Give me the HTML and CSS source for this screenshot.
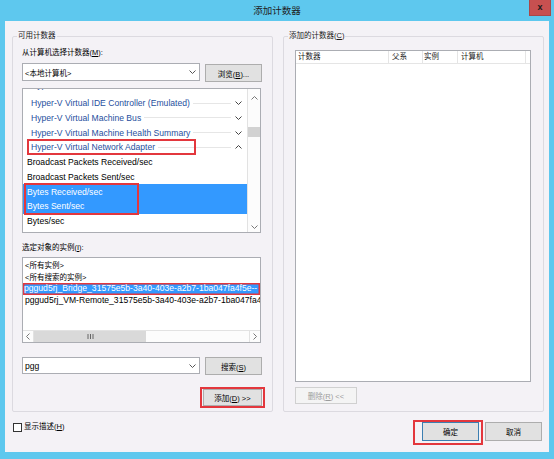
FILE: index.html
```html
<!DOCTYPE html>
<html>
<head>
<meta charset="utf-8">
<title>添加计数器</title>
<link rel="stylesheet" href="styles.css">
</head>
<body>
<div class="window">
  <div class="titlebar">
    <span></span>
    <span class="title">添加计数器</span>
    <span class="close">x</span>
  </div>
  <div class="client">
    <div class="groups">
      <fieldset class="group">
        <legend>可用计数器</legend>
        <div class="gbody">
          <div class="label">从计算机选择计数器(<u>M</u>):</div>
          <div class="row first">
            <div class="combo"><span>&lt;本地计算机&gt;</span><svg class="chev" width="7" height="4" viewBox="0 0 7 4"><path d="M0.5 0.5 L3.5 3.5 L6.5 0.5" fill="none" stroke="#555" stroke-width="1"/></svg></div>
            <button class="btn browse">浏览(<u>B</u>)...</button>
          </div>
          <div class="listbox counters">
            <div class="items">
              <div class="inner">
                <div class="item cat clip"><span>Hyper-V Virtual Hard Disk</span><span class="rule"></span><svg class="chev" width="7" height="4" viewBox="0 0 7 4"><path d="M0.5 0.5 L3.5 3.5 L6.5 0.5" fill="none" stroke="#444" stroke-width="1"/></svg></div>
                <div class="item cat"><span>Hyper-V Virtual IDE Controller (Emulated)</span><span class="rule"></span><svg class="chev" width="7" height="4" viewBox="0 0 7 4"><path d="M0.5 0.5 L3.5 3.5 L6.5 0.5" fill="none" stroke="#444" stroke-width="1"/></svg></div>
                <div class="item cat"><span>Hyper-V Virtual Machine Bus</span><span class="rule"></span><svg class="chev" width="7" height="4" viewBox="0 0 7 4"><path d="M0.5 0.5 L3.5 3.5 L6.5 0.5" fill="none" stroke="#444" stroke-width="1"/></svg></div>
                <div class="item cat"><span>Hyper-V Virtual Machine Health Summary</span><span class="rule"></span><svg class="chev" width="7" height="4" viewBox="0 0 7 4"><path d="M0.5 0.5 L3.5 3.5 L6.5 0.5" fill="none" stroke="#444" stroke-width="1"/></svg></div>
                <div class="item cat"><span>Hyper-V Virtual Network Adapter</span><span class="rule"></span><svg class="chev" width="7" height="4" viewBox="0 0 7 4"><path d="M0.5 3.5 L3.5 0.5 L6.5 3.5" fill="none" stroke="#444" stroke-width="1"/></svg></div>
                <div class="item">Broadcast Packets Received/sec</div>
                <div class="item">Broadcast Packets Sent/sec</div>
                <div class="item sel">Bytes Received/sec</div>
                <div class="item sel">Bytes Sent/sec</div>
                <div class="item">Bytes/sec</div>
                <div class="item">Discarded Packets Received/sec</div>
              </div>
            </div>
            <div class="vscroll">
              <div class="sarrow up"><svg width="7" height="4" viewBox="0 0 7 4"><path d="M0.5 3.5 L3.5 0.5 L6.5 3.5" fill="none" stroke="#777" stroke-width="1"/></svg></div>
              <div class="vthumb"></div>
              <div class="strack"></div>
              <div class="sarrow down"><svg width="7" height="4" viewBox="0 0 7 4"><path d="M0.5 0.5 L3.5 3.5 L6.5 0.5" fill="none" stroke="#777" stroke-width="1"/></svg></div>
            </div>
            <div class="annot annot-net"></div>
            <div class="annot annot-bytes"></div>
          </div>
          <div class="label second">选定对象的实例(<u>I</u>):</div>
          <div class="listbox instances">
            <div class="items">
              <div class="irow">&lt;所有实例&gt;</div>
              <div class="irow">&lt;所有搜索的实例&gt;</div>
              <div class="irow lat isel">pggud5rj_Bridge_31575e5b-3a40-403e-a2b7-1ba047fa4f5e--</div>
              <div class="irow lat">pggud5rj_VM-Remote_31575e5b-3a40-403e-a2b7-1ba047fa4f5e--</div>
            </div>
            <div class="hscroll">
              <div class="harrow left"><svg width="4" height="7" viewBox="0 0 4 7"><path d="M3.5 0.5 L0.5 3.5 L3.5 6.5" fill="none" stroke="#777" stroke-width="1"/></svg></div>
              <div class="hthumb"><svg width="7" height="5" viewBox="0 0 7 5"><path d="M1 0 V5 M3.5 0 V5 M6 0 V5" stroke="#666" stroke-width="1"/></svg></div>
              <div class="strack"></div>
              <div class="harrow right"><svg width="4" height="7" viewBox="0 0 4 7"><path d="M0.5 0.5 L3.5 3.5 L0.5 6.5" fill="none" stroke="#777" stroke-width="1"/></svg></div>
            </div>
          </div>
          <div class="row search">
            <div class="combo small"><span class="lat">pgg</span><svg class="chev" width="7" height="4" viewBox="0 0 7 4"><path d="M0.5 0.5 L3.5 3.5 L6.5 0.5" fill="none" stroke="#555" stroke-width="1"/></svg></div>
            <button class="btn">搜索(<u>S</u>)</button>
          </div>
          <span class="redbox addbox"><button class="btn add">添加(<u>D</u>) &gt;&gt;</button></span>
        </div>
      </fieldset>
      <fieldset class="group">
        <legend>添加的计数器(<u>C</u>)</legend>
        <div class="gbody right">
          <div class="table">
            <div class="thead">
              <div class="th c1">计数器</div>
              <div class="th c2">父系</div>
              <div class="th c3">实例</div>
              <div class="th c4">计算机</div>
            </div>
          </div>
          <button class="btn remove" disabled>删除(<u>R</u>) &lt;&lt;</button>
        </div>
      </fieldset>
    </div>
    <div class="footer">
      <label class="check"><span class="box"></span><span>显示描述(<u>H</u>)</span></label>
      <span class="spacer"></span>
      <span class="redbox okbox"><button class="btn ok">确定</button></span>
      <button class="btn cancel">取消</button>
    </div>
  </div>
</div>
</body>
</html>
```

FILE: styles.css
```css
* { box-sizing: border-box; }
html, body { margin: 0; padding: 0; }
body {
  width: 554px;
  height: 459px;
  overflow: hidden;
  background: #5ec8ee;
  font-family: "Liberation Sans", "Noto Sans CJK SC", sans-serif;
  font-size: 7.5px;
  color: #000;
}
u { text-decoration: underline; }
.window { display: flex; flex-direction: column; height: 459px; }

.titlebar {
  height: 21px;
  display: grid;
  grid-template-columns: 1fr auto 1fr;
  align-items: start;
}
.title {
  font-family: "Noto Sans CJK SC", sans-serif;
  font-size: 9.5px;
  line-height: 21px;
  color: #1e1e1e;
}
.close {
  justify-self: end;
  margin-right: 3px;
  width: 22px;
  height: 16px;
  background: #c75050;
  border: 1px solid #a94848;
  border-top: 0;
  color: #1a1a1a;
  font-size: 9px;
  font-weight: bold;
  line-height: 14px;
  text-align: center;
}

.client {
  flex: 1;
  margin: 0 5px 7px;
  background: #f4f2f6;
  display: flex;
  flex-direction: column;
}
.groups { display: flex; gap: 10px; margin: 10px 0 0 7px; }
.group {
  margin: 0;
  padding: 0;
  width: 261px;
  min-width: 0;
  border: 1px solid #dcdae0;
  border-radius: 2px;
}
.group legend {
  margin-left: 4px;
  padding: 0 1px;
  line-height: 10px;
  color: #1a1a1a;
}
.gbody {
  display: flex;
  flex-direction: column;
  align-items: flex-start;
  padding: 0 0 3px 9px;
}
.gbody.right { padding-left: 11px; }

.label { line-height: 10px; margin-top: 7px; white-space: nowrap; }
.label.second { margin-top: 10px; }

.row { display: flex; gap: 5px; align-items: flex-start; }
.row.first { margin-top: 5px; }
.row.search { margin-top: 14px; }

.combo {
  width: 178px;
  height: 18px;
  background: #fff;
  border: 1px solid #abadb3;
  display: flex;
  align-items: center;
  justify-content: space-between;
  padding: 0 3px 0 2px;
  white-space: nowrap;
}
.combo.small { height: 17px; }
.lat { font-size: 8.6px; }

.btn {
  font: inherit;
  color: #000;
  width: 57px;
  height: 18px;
  padding: 0;
  background: #e1e1e1;
  border: 1px solid #adadad;
  border-radius: 0;
  white-space: nowrap;
}
.btn.browse { margin-top: 1px; }

.listbox {
  position: relative;
  width: 239px;
  background: #fff;
  border: 1px solid #abadb3;
  overflow: hidden;
}
.counters { height: 145px; margin-top: 6px; display: flex; }
.counters .items { flex: 1; overflow: hidden; }
.counters .inner { margin-top: -8px; }
.item {
  height: 14.75px;
  display: flex;
  align-items: center;
  padding-left: 4px;
  font-size: 8.6px;
  white-space: nowrap;
}
.item.clip { align-items: flex-start; line-height: 9px; }
.item.clip .chev { margin-top: 3px; }
.item.clip .rule { margin-top: 5px; }
.item.cat { color: #1f4f9e; padding-left: 8px; padding-right: 5px; }
.item .rule { flex: 1; height: 1px; background: #e6e6e6; margin: 0 4px 0 3px; }
.item.sel { background: #3399ff; color: #fff; }

.vscroll {
  width: 13px;
  border-left: 1px solid #e2e2e2;
  background: #fcfcfc;
  display: flex;
  flex-direction: column;
}
.sarrow { display: flex; align-items: center; justify-content: center; }
.sarrow.up { height: 17px; }
.sarrow.down { height: 11px; }
.vthumb { height: 10px; margin-top: 21px; background: #d2d2d2; }
.strack { flex: 1; }

.annot { position: absolute; border: 2px solid #e3373d; pointer-events: none; }
.annot-net { left: 4px; top: 50px; width: 169px; height: 16px; }
.annot-bytes { left: 1px; top: 94px; width: 115px; height: 32px; }

.instances { height: 86px; margin-top: 4px; display: flex; flex-direction: column; }
.instances .items { flex: 1; padding-top: 2px; overflow: hidden; }
.irow {
  height: 11.7px;
  line-height: 11.7px;
  padding-left: 2px;
  white-space: nowrap;
  overflow: hidden;
}
.irow.isel {
  background: #3399ff;
  color: #fff;
  box-shadow: inset 0 0 0 1.5px #e3373d;
  padding-left: 1px;
}
.hscroll {
  height: 12px;
  border-top: 1px solid #e2e2e2;
  background: #fcfcfc;
  display: flex;
}
.harrow { width: 11px; display: flex; align-items: center; justify-content: center; }
.harrow.left { border-right: 1px solid #e2e2e2; }
.harrow.right { border-left: 1px solid #e2e2e2; }
.hthumb {
  width: 112px;
  background: #d9d9d9;
  display: flex;
  align-items: center;
  justify-content: center;
}

.redbox { display: flex; border: 2px solid #e3373d; }
.addbox { margin: 12px 0 0 178px; padding: 0 1px; }
.btn.add { width: 59px; height: 17px; }

.table {
  width: 236px;
  height: 332px;
  margin-top: 9px;
  background: #fff;
  border: 1px solid #abadb3;
}
.thead { display: flex; height: 13px; border-bottom: 1px solid #e5e5e5; }
.th { line-height: 12px; border-right: 1px solid #e5e5e5; color: #1a1a1a; white-space: nowrap; }
.th.c1 { width: 93px; padding-left: 2px; }
.th.c2 { width: 34px; padding-left: 3px; }
.th.c3 { width: 35px; padding-left: 1px; }
.th.c4 { width: 68px; padding-left: 3px; }
.btn.remove {
  margin-top: 5px;
  width: 62px;
  height: 17px;
  background: #f4f4f4;
  border-color: #d0d0d0;
  color: #9c9c9c;
}

.footer { display: flex; align-items: flex-start; padding-top: 8px; }
.check { display: flex; align-items: center; gap: 2px; margin: 2px 0 0 8px; line-height: 10px; }
.box { width: 9px; height: 9px; background: #fff; border: 1px solid #333; }
.spacer { flex: 1; }
.okbox { padding: 0 2px 2px 7px; }
.btn.ok { width: 57px; height: 19px; border-color: #3c7fb1; }
.btn.cancel { width: 57px; height: 19px; margin: 2px 7px 0 2px; }
```
